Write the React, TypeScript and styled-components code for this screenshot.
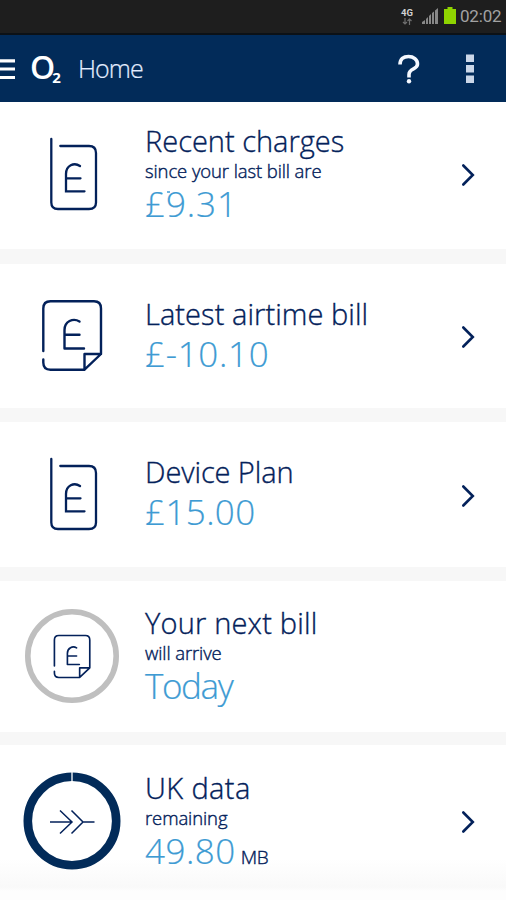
import React from 'react';
import styled, { createGlobalStyle } from 'styled-components';

const NAVY = '#03215a';
const BAR = '#022b59';

const GlobalStyle = createGlobalStyle`
  * { box-sizing: border-box; }
  body { margin: 0; background: #f7f7f7; font-family: 'Open Sans', 'Noto Sans', sans-serif; }
  svg { display: block; flex: none; }
`;

const Screen = styled.main`
  width: 506px;
  height: 900px;
  overflow: hidden;
  display: flex;
  flex-direction: column;
`;

const StatusBar = styled.div`
  height: 35px;
  flex: none;
  background: #1e1e1e;
  border-bottom: 2px solid #0c1116;
  display: flex;
  justify-content: flex-end;
  align-items: flex-start;
  padding-right: 4px;
`;

const Network = styled.div`
  width: 14px;
  margin: 8px 8px 0 0;
  display: flex;
  flex-direction: column;
  align-items: center;
  font: 700 9.5px/10px Roboto, sans-serif;
  color: #d2d2d2;
`;

const Signal = styled.svg`
  margin: 8px 6px 0 0;
`;

const Battery = styled.svg`
  margin: 7px 4px 0 0;
`;

const Clock = styled.span`
  width: 42px;
  margin-top: 6px;
  font: 400 17px/20px Roboto, sans-serif;
  letter-spacing: -0.2px;
  white-space: nowrap;
  color: #a2a2a2;
`;

const AppBar = styled.header`
  height: 67px;
  flex: none;
  background: ${BAR};
  display: flex;
  align-items: center;
  color: #fff;
`;

const Menu = styled.svg`
  margin-right: 15px;
`;

const Logo = styled.div`
  width: 48px;
  height: 40px;
  display: flex;
  font-weight: 600;
  font-size: 32px;
  line-height: 35px;
`;

const LogoDigit = styled.span`
  font-size: 15px;
  font-weight: 700;
  line-height: 20px;
  margin: 18px 0 0 -3px;
`;

const Heading = styled.h1`
  margin: 0 0 2px;
  flex: 1;
  font-size: 25px;
  line-height: 34px;
  font-weight: 300;
  letter-spacing: -0.9px;
  color: #e3edff;
  -webkit-text-stroke: 0.2px #e3edff;
`;

const Help = styled.svg`
  margin-right: 46px;
`;

const More = styled.svg`
  margin-right: 32px;
`;

const Card = styled.section<{ $height: number; $last?: boolean }>`
  height: ${(p) => p.$height}px;
  flex: none;
  display: flex;
  align-items: flex-start;
  background: ${(p) =>
    p.$last ? 'linear-gradient(#fff 0, #fff 114px, #f9f9f9 142px, #fdfdfd 146px, #fdfdfd 155px)' : '#fff'};
`;

const Gap = styled.div<{ $height: number }>`
  height: ${(p) => p.$height}px;
  flex: none;
  background: #f7f7f7;
`;

const IconCell = styled.div<{ $top: number; $width?: number }>`
  width: 145px;
  flex: none;
  padding: ${(p) => p.$top}px 1px 0 0;
  display: flex;
  justify-content: center;
`;

const PhoneCell = styled(IconCell)`
  padding-right: 0;
  padding-left: 2px;
`;

const Copy = styled.div<{ $top: number }>`
  flex: 1;
  padding-top: ${(p) => p.$top}px;
  white-space: nowrap;
`;

const Title = styled.h2<{ $spacing: number }>`
  margin: 0;
  font-size: 29px;
  line-height: 36px;
  font-weight: 300;
  letter-spacing: ${(p) => p.$spacing}px;
  color: ${NAVY};
  -webkit-text-stroke: 0.35px ${NAVY};
`;

const Note = styled.p<{ $spacing: number }>`
  margin: 1px 0 0;
  font-size: 18.5px;
  line-height: 22px;
  font-weight: 300;
  letter-spacing: ${(p) => p.$spacing}px;
  color: ${NAVY};
  -webkit-text-stroke: 0.4px ${NAVY};
`;

const Amount = styled.p<{ $spacing: number }>`
  margin: 0;
  font-size: 35px;
  line-height: 44px;
  font-weight: 300;
  letter-spacing: ${(p) => p.$spacing}px;
  color: #3e9bd3;
  -webkit-text-stroke: 0.2px #3e9bd3;
`;

const CurrencyMark = styled.span`
  position: relative;

  &::after {
    content: '';
    position: absolute;
    left: 22px;
    top: 11px;
    width: 3px;
    height: 2px;
    background: #6fb4e0;
  }
`;

const Unit = styled.span`
  margin-left: 5px;
  font-size: 19px;
  letter-spacing: -0.3px;
  font-weight: 300;
  color: ${NAVY};
  -webkit-text-stroke: 0.4px ${NAVY};
`;

const Chevron = styled.svg<{ $top: number }>`
  margin: ${(p) => p.$top}px 30px 0 0;
`;

const Arrow = ({ top }: { top: number }) => (
  <Chevron $top={top} width="16" height="24" viewBox="0 0 16 24">
    <path d="M3.3 2.5 12.8 12 3.3 21.5" fill="none" stroke={NAVY} strokeWidth="2.6" strokeLinecap="round" />
  </Chevron>
);

const PhoneIcon = () => (
  <svg width="49" height="74" viewBox="49 136 49 74" fill="none" stroke={NAVY} strokeWidth="2.3" strokeLinecap="round">
    <path d="M51.3 138V201.5Q51.3 208 58 208H89Q96 208 96 201.5V152Q96 145 89 145H60.3" />
    <path d="M80 165C74 161 66 164.500 66 173V190.300H84.500M66 177.300H80.500" />
  </svg>
);

const PaperIcon = ({ small }: { small?: boolean }) => (
  <svg
    width={small ? 38 : 62}
    height={small ? 45 : 73}
    viewBox="41 299 62 73"
    fill="none"
    stroke={NAVY}
    strokeWidth={small ? 2.7 : 2.4}
    strokeLinecap="round"
    strokeLinejoin="round"
  >
    <path d="M43.300 351V308.500Q43.300 301.300 50.500 301.300H94Q101 301.300 101 308.500V354L84.500 369.700H50.500Q43.300 369.700 43.300 362.500V359.500M84.500 369.700V354H101" />
    <path d="M79.500 321.500C73 317.500 64.500 321.500 64.500 330V348.500H84M64.500 334.700H79.500" />
  </svg>
);

const BillRing = () => (
  <svg width="96" height="96" viewBox="0 0 96 96">
    <circle cx="48" cy="48" r="44.200" fill="none" stroke="#bfbfbf" strokeWidth="5.600" />
    <g transform="translate(29 26)">
      <PaperIcon small />
    </g>
  </svg>
);

const DataRing = () => (
  <svg width="98" height="98" viewBox="0 0 98 98" fill="none">
    <circle cx="49" cy="49" r="44.200" stroke={BAR} strokeWidth="8.600" />
    <path d="M49 0V10" stroke="#fff" strokeWidth="1.300" />
    <path d="M27 50H49M37 38.500 49 50 37 61.500M48.500 38.500 60 50 48.500 61.500M60 50H71.500" stroke={NAVY} strokeWidth="1.500" />
  </svg>
);

export default function App() {
  return (
    <>
      <GlobalStyle />
      <Screen>
        <StatusBar>
          <Network>
            4G
            <svg width="10" height="7" viewBox="0 0 10 7" fill="none" stroke="#707070" strokeWidth="1.200">
              <path d="M3 0V6M1 4 3 6 5 4M7.500 7V1M5.500 3 7.500 1 9.500 3" />
            </svg>
          </Network>
          <Signal width="16" height="16" viewBox="0 0 16 16">
            <path d="M0 16V14L3 12V16ZM4 16V11L6 9V16ZM7 16V8L9 6V16ZM10 16V5L12 3.500V16ZM13 16V2.500L16 0V16Z" fill="#888" />
          </Signal>
          <Battery width="12" height="17" viewBox="0 0 12 17">
            <path d="M3.500 0H8.500V2H12V17H0V2H3.500Z" fill="#8fd400" />
          </Battery>
          <Clock>02:02</Clock>
        </StatusBar>

        <AppBar>
          <Menu width="15" height="22" viewBox="0 0 15 22">
            <path d="M0 2.800H15M0 11H15M0 19.500H15" stroke="#fff" strokeWidth="3.200" />
          </Menu>
          <Logo>
            O<LogoDigit>2</LogoDigit>
          </Logo>
          <Heading>Home</Heading>
          <Help width="22" height="30" viewBox="0 0 22 30">
            <path d="M2 10.500C2 5 5.500 2.500 10.500 2.500S19.500 5.500 19.500 10C19.500 16 11 13.500 11 20.500V23.500" fill="none" stroke="#f4f8ff" strokeWidth="3.600" />
            <circle cx="11" cy="27.300" r="2.200" fill="#f4f8ff" />
          </Help>
          <More width="8" height="30" viewBox="0 0 8 30">
            <path d="M0 0.500H8V8H0ZM0 11H8V18.500H0ZM0 21.500H8V29H0Z" fill="#cbd7e8" />
          </More>
        </AppBar>

        <Card $height={147}>
          <PhoneCell $top={35}><PhoneIcon /></PhoneCell>
          <Copy $top={21}>
            <Title $spacing={0}>Recent charges</Title>
            <Note $spacing={-0.1}>since your last bill are</Note>
            <Amount $spacing={0.9}><CurrencyMark>£</CurrencyMark>9.31</Amount>
          </Copy>
          <Arrow top={61} />
        </Card>
        <Gap $height={15} />
        <Card $height={144}>
          <IconCell $top={35}><PaperIcon /></IconCell>
          <Copy $top={32}>
            <Title $spacing={0.06}>Latest airtime bill</Title>
            <Amount $spacing={0.7}>£-10.10</Amount>
          </Copy>
          <Arrow top={61} />
        </Card>
        <Gap $height={14} />
        <Card $height={145}>
          <PhoneCell $top={35}><PhoneIcon /></PhoneCell>
          <Copy $top={32}>
            <Title $spacing={-0.1}>Device Plan</Title>
            <Amount $spacing={0.4}>£15.00</Amount>
          </Copy>
          <Arrow top={62} />
        </Card>
        <Gap $height={14} />
        <Card $height={151}>
          <IconCell $top={27}><BillRing /></IconCell>
          <Copy $top={24}>
            <Title $spacing={0.18}>Your next bill</Title>
            <Note $spacing={-0.1}>will arrive</Note>
            <Amount $spacing={-1.4}>Today</Amount>
          </Copy>
        </Card>
        <Gap $height={13} />
        <Card $height={155} $last>
          <IconCell $top={27}><DataRing /></IconCell>
          <Copy $top={25}>
            <Title $spacing={0.4}>UK data</Title>
            <Note $spacing={-0.1}>remaining</Note>
            <Amount $spacing={0.5}>49.80<Unit>MB</Unit></Amount>
          </Copy>
          <Arrow top={65} />
        </Card>
      </Screen>
    </>
  );
}
